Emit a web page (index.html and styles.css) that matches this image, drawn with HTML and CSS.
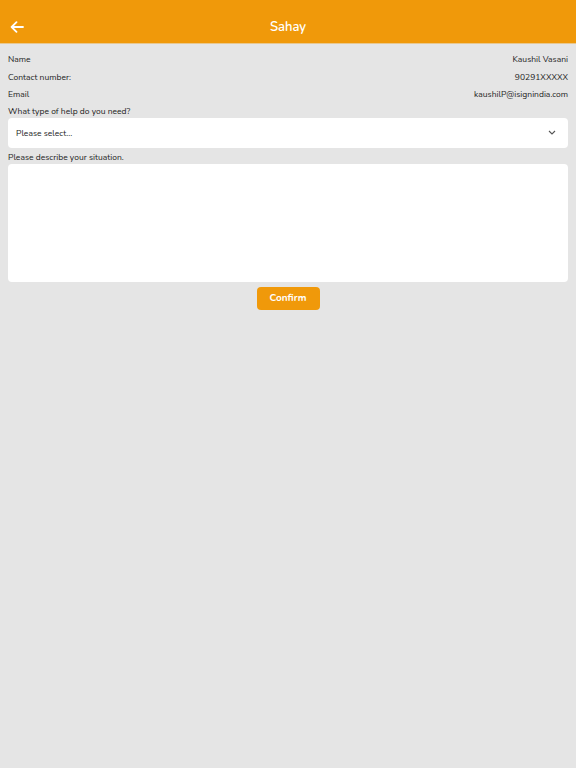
FILE: index.html
```html
<!DOCTYPE html>
<html>
<head>
<meta charset="utf-8">
<link rel="stylesheet" href="styles.css">
</head>
<body>
<header class="bar">
  <svg class="back" width="14" height="12" viewBox="0 0 14 12"><path d="M13 6H2M6.5 1.2L1.6 6l4.9 4.8" fill="none" stroke="#fff" stroke-width="1.8" stroke-linecap="round" stroke-linejoin="round"/></svg>
  <h1 class="title">Sahay</h1>
</header>
<main class="content">
  <div class="row"><span>Name</span><span>Kaushil Vasani</span></div>
  <div class="row"><span>Contact number:</span><span>90291XXXXX</span></div>
  <div class="row"><span>Email</span><span>kaushilP@isignindia.com</span></div>
  <div class="label">What type of help do you need?</div>
  <div class="select">
    <span>Please select...</span>
    <svg width="8" height="5" viewBox="0 0 8 5"><path d="M1 1l3 3 3-3" fill="none" stroke="#555" stroke-width="1.1"/></svg>
  </div>
  <div class="label label2">Please describe your situation.</div>
  <div class="textarea"></div>
  <div class="actions"><button class="confirm">Confirm</button></div>
</main>
</body>
</html>
```
FILE: styles.css
```css
html, body { margin: 0; padding: 0; }
body {
  background: #e5e5e5;
  font-family: "Nunito", "Lato", "Open Sans", sans-serif;
  color: #222;
  width: 576px;
  height: 768px;
}
.bar {
  height: 43px;
  background: #f0990a;
  border-bottom: 1px solid #e8c890;
  position: relative;
  display: flex;
  align-items: center;
  justify-content: center;
}
.back { position: absolute; left: 10px; top: 21px; }
.title {
  margin: 11px 0 0;
  font-size: 13px;
  font-weight: 600;
  color: #fff;
}
.content { padding: 7px 8px 0; font-size: 8.5px; }
.row {
  display: flex;
  justify-content: space-between;
  height: 17.5px;
  line-height: 17.5px;
}
.label { height: 14px; line-height: 14px; }
.select {
  height: 30px;
  background: #fff;
  border-radius: 4px;
  display: flex;
  align-items: center;
  justify-content: space-between;
  padding: 0 12px 0 8px;
}
.label2 { margin-top: 3px; height: 13px; line-height: 13px; }
.textarea {
  height: 118px;
  background: #fff;
  border-radius: 4px;
}
.actions { display: flex; justify-content: center; margin-top: 5px; }
.confirm {
  width: 63px;
  height: 23px;
  border: none;
  border-radius: 4px;
  background: #f0990a;
  color: #fff;
  font-family: inherit;
  font-weight: 700;
  font-size: 10px;
  padding: 0;
}
```
